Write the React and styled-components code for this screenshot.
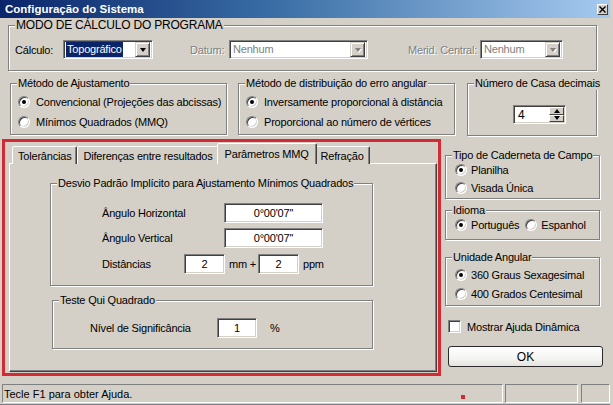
import React from "react";
import styled, { createGlobalStyle } from "styled-components";

const Global = createGlobalStyle`
  html, body { margin: 0; padding: 0; background: #d4d0c8; }
  body {
    font-family: "Liberation Sans", Arial, sans-serif;
    font-size: 11px;
    letter-spacing: -0.2px;
    color: #000;
  }
  * { box-sizing: border-box; }
`;

const Window = styled.div`
  width: 613px;
  height: 405px;
  background: #d4d0c8;
  display: flex;
  flex-direction: column;
  overflow: hidden;
  padding-right: 3px;
`;

const TitleBar = styled.div`
  height: 18px;
  flex: none;
  display: flex;
  align-items: center;
  justify-content: space-between;
  padding: 0 2px 0 5px;
  background: linear-gradient(to right, #0a246a, #3a6ea5 45%, #a6caf0);
  color: #fff;
  font: bold 11.5px "Liberation Sans", Arial, sans-serif;
  letter-spacing: 0;
`;

const CloseButton = styled.div`
  width: 11px;
  height: 11px;
  background: #d4d0c8;
  border: 1px solid;
  border-color: #fff #404040 #404040 #fff;
  display: flex;
  align-items: center;
  justify-content: center;
`;

const Content = styled.div`
  flex: 1;
  display: flex;
  flex-direction: column;
`;

const Row = styled.div`
  display: flex;
  align-items: flex-start;
  margin-top: ${(p) => p.$mt || 0}px;
  margin-left: ${(p) => p.$ml || 0}px;
`;

const GroupBox = styled.div`
  position: relative;
  flex: none;
  width: ${(p) => p.$w}px;
  height: ${(p) => p.$h}px;
  margin-top: ${(p) => p.$mt || 0}px;
  margin-left: ${(p) => p.$ml || 0}px;
  padding: ${(p) => p.$pad || "0"};
  border: 1px solid #808080;
  box-shadow: inset 1px 1px 0 #fff, 1px 1px 0 #fff;
  display: flex;
  flex-direction: ${(p) => (p.$row ? "row" : "column")};
  align-items: ${(p) => (p.$row ? "center" : "stretch")};
`;

const Legend = styled.span`
  position: absolute;
  top: -8px;
  left: 6px;
  padding: 0 1px;
  line-height: 14px;
  background: #d4d0c8;
  white-space: nowrap;
  font-size: ${(p) => p.$size || 11}px;
`;

const Caption = styled.span`
  flex: none;
  width: ${(p) => p.$w}px;
  margin-left: ${(p) => p.$ml || 0}px;
  white-space: nowrap;
  color: ${(p) => (p.$disabled ? "#808080" : "#000")};
  text-shadow: ${(p) => (p.$disabled ? "1px 1px 0 #fff" : "none")};
`;

const Combo = styled.div`
  flex: none;
  width: ${(p) => p.$w}px;
  height: 19px;
  background: #fff;
  border: 1px solid;
  border-color: #808080 #fff #fff #808080;
  box-shadow: inset 1px 1px 0 #404040, inset -1px -1px 0 #d4d0c8;
  padding: 2px;
  display: flex;
  align-items: center;
  justify-content: space-between;
`;

const ComboText = styled.span`
  padding: 0 1px;
  line-height: 15px;
  white-space: nowrap;
  color: ${(p) => (p.$disabled ? "#808080" : p.$selected ? "#fff" : "#000")};
  background: ${(p) => (p.$selected ? "#0a246a" : "transparent")};
`;

const DropButton = styled.div`
  width: 15px;
  height: 15px;
  flex: none;
  background: #d4d0c8;
  border: 1px solid;
  border-color: #d4d0c8 #404040 #404040 #d4d0c8;
  box-shadow: inset 1px 1px 0 #fff, inset -1px -1px 0 #808080;
  display: flex;
  align-items: center;
  justify-content: center;
`;

const Arrow = styled.span`
  width: 0;
  height: 0;
  border-left: 3.5px solid transparent;
  border-right: 3.5px solid transparent;
  border-${(p) => (p.$up ? "bottom" : "top")}: 4px solid ${(p) => (p.$disabled ? "#808080" : "#000")};
  filter: ${(p) => (p.$disabled ? "drop-shadow(1px 1px 0 #fff)" : "none")};
`;

const RadioItem = styled.label`
  display: flex;
  align-items: center;
  gap: ${(p) => (p.$gap === undefined ? 6 : p.$gap)}px;
  height: ${(p) => p.$h || 20}px;
  margin-left: ${(p) => p.$ml || 0}px;
  white-space: nowrap;
  flex: none;
`;

const RadioDot = styled.span`
  width: 12px;
  height: 12px;
  flex: none;
  border-radius: 50%;
  background: #fff;
  border: 1px solid;
  border-color: #808080 #fff #fff #808080;
  box-shadow: inset 1px 1px 0 #404040, inset -1px -1px 0 #d4d0c8;
  display: flex;
  align-items: center;
  justify-content: center;
  &::after {
    content: "";
    width: 4px;
    height: 4px;
    border-radius: 50%;
    background: ${(p) => (p.$checked ? "#000" : "transparent")};
  }
`;

const Radio = ({ checked, children, ...rest }) => (
  <RadioItem {...rest}>
    <RadioDot $checked={checked} />
    <span>{children}</span>
  </RadioItem>
);

const SpinBox = styled.div`
  width: 53px;
  height: 19px;
  background: #fff;
  border: 1px solid;
  border-color: #808080 #fff #fff #808080;
  box-shadow: inset 1px 1px 0 #404040, inset -1px -1px 0 #d4d0c8;
  padding: 2px 1px 2px 4px;
  display: flex;
  align-items: center;
  justify-content: space-between;
  font-size: 12px;
`;

const SpinButtons = styled.div`
  width: 15px;
  height: 15px;
  display: flex;
  flex-direction: column;
`;

const SpinHalf = styled.div`
  flex: 1;
  background: #d4d0c8;
  border: 1px solid;
  border-color: #fff #404040 #404040 #fff;
  display: flex;
  align-items: center;
  justify-content: center;
`;

const RedFrame = styled.div`
  flex: none;
  width: 439px;
  height: 237px;
  margin-left: 2px;
  border: 3px solid #d42a34;
  padding: 1px 1px 1px 4px;
  display: flex;
  flex-direction: column;
`;

const TabStrip = styled.div`
  height: 21px;
  flex: none;
  display: flex;
  align-items: flex-end;
  padding-left: 3px;
`;

const Tab = styled.div`
  position: relative;
  z-index: ${(p) => (p.$active ? 2 : 0)};
  height: ${(p) => (p.$active ? 21 : 18)}px;
  margin: 0 ${(p) => (p.$active ? -2 : 0)}px;
  padding: 0 ${(p) => (p.$active ? 7 : 5)}px;
  display: flex;
  align-items: center;
  white-space: nowrap;
  background: #d4d0c8;
  border: 1px solid;
  border-bottom: none;
  border-color: #fff #404040 transparent #fff;
  box-shadow: inset -1px 0 0 #808080;
  border-radius: 2px 2px 0 0;
`;

const TabPanel = styled.div`
  flex: 1;
  margin-top: -1px;
  border: 1px solid;
  border-color: #fff #404040 #404040 #fff;
  box-shadow: inset -1px -1px 0 #808080;
  padding-left: 40px;
  display: flex;
  flex-direction: column;
  align-items: flex-start;
`;

const FormRow = styled.div`
  display: flex;
  align-items: center;
  height: 20px;
  margin-top: ${(p) => p.$mt || 0}px;
`;

const RowLabel = styled.span`
  flex: none;
  width: ${(p) => p.$w}px;
  white-space: nowrap;
`;

const Field = styled.div`
  flex: none;
  width: ${(p) => p.$w}px;
  height: 20px;
  background: #fff;
  border: 1px solid;
  border-color: #808080 #fff #fff #808080;
  box-shadow: inset 1px 1px 0 #404040, inset -1px -1px 0 #d4d0c8;
  display: flex;
  align-items: center;
  justify-content: center;
`;

const Unit = styled.span`
  flex: none;
  width: ${(p) => (p.$w ? `${p.$w}px` : "auto")};
  margin-left: ${(p) => p.$ml || 0}px;
  white-space: nowrap;
`;

const SideColumn = styled.div`
  flex: none;
  width: 158px;
  margin-left: 4px;
  display: flex;
  flex-direction: column;
  align-items: flex-start;
`;

const CheckRow = styled.label`
  display: flex;
  align-items: center;
  gap: 6px;
  height: 13px;
  margin: 14px 0 0 3px;
  white-space: nowrap;
`;

const CheckBox = styled.span`
  width: 13px;
  height: 13px;
  background: #fff;
  border: 1px solid;
  border-color: #808080 #fff #fff #808080;
  box-shadow: inset 1px 1px 0 #404040, inset -1px -1px 0 #d4d0c8;
`;

const OkButton = styled.button`
  width: 155px;
  height: 21px;
  margin: 13px 0 0 3px;
  border: 1px solid #2a2a2a;
  border-radius: 3px;
  background: linear-gradient(#ffffff, #f4f4f2 60%, #e4e3de);
  font: inherit;
  font-size: 12px;
  color: #000;
  padding: 0;
`;

const StatusBar = styled.div`
  height: 22px;
  flex: none;
  display: flex;
  gap: 2px;
  padding: 1px 0 2px 2px;
  box-shadow: inset 0 -1px 0 #808080;
  font-size: 11px;
  letter-spacing: 0;
`;

const StatusPanel = styled.div`
  position: relative;
  width: ${(p) => (p.$w ? `${p.$w}px` : "auto")};
  flex: ${(p) => (p.$w ? "none" : 1)};
  border: 1px solid;
  border-color: #808080 #fff #fff #808080;
  padding-left: 1px;
  display: flex;
  align-items: center;
  margin-left: ${(p) => p.$ml || 0}px;
`;

const Mark = styled.span`
  position: absolute;
  left: 458px;
  top: 10px;
  width: 4px;
  height: 4px;
  background: #d42a34;
`;

export default function App() {
  return (
    <>
      <Global />
      <Window>
        <TitleBar>
          <span>Configuração do Sistema</span>
          <CloseButton>
            <svg width="7" height="7" viewBox="0 0 7 7">
              <path d="M0.5 0.5 L6.5 6.5 M6.5 0.5 L0.5 6.5" stroke="#000" strokeWidth="1.4" />
            </svg>
          </CloseButton>
        </TitleBar>
        <Content>
          <Row $mt={7} $ml={8}>
            <GroupBox $w={589} $h={46} $row $pad="3px 0 0 6px">
              <Legend $size={12}>MODO DE CÁLCULO DO PROGRAMA</Legend>
              <Caption $w={48}>Cálculo:</Caption>
              <Combo $w={90}>
                <ComboText $selected>Topográfico</ComboText>
                <DropButton>
                  <Arrow />
                </DropButton>
              </Combo>
              <Caption $w={39} $ml={37} $disabled>
                Datum:
              </Caption>
              <Combo $w={139}>
                <ComboText $disabled>Nenhum</ComboText>
                <DropButton>
                  <Arrow $disabled />
                </DropButton>
              </Combo>
              <Caption $w={72} $ml={40} $disabled>
                Merid. Central:
              </Caption>
              <Combo $w={83}>
                <ComboText $disabled>Nenhum</ComboText>
                <DropButton>
                  <Arrow $disabled />
                </DropButton>
              </Combo>
            </GroupBox>
          </Row>

          <Row $mt={12} $ml={10}>
            <GroupBox $w={217} $h={52} $pad="8px 0 0 7px">
              <Legend>Método de Ajustamento</Legend>
              <Radio checked>Convencional (Projeções das abcissas)</Radio>
              <Radio>Mínimos Quadrados (MMQ)</Radio>
            </GroupBox>
            <GroupBox $w={217} $h={52} $ml={11} $pad="8px 0 0 7px">
              <Legend>Método de distribuição do erro angular</Legend>
              <Radio checked>Inversamente proporcional à distância</Radio>
              <Radio>Proporcional ao número de vértices</Radio>
            </GroupBox>
            <GroupBox $w={130} $h={53} $ml={12} $pad="21px 0 0 45px">
              <Legend>Número de Casa decimais</Legend>
              <SpinBox>
                <span>4</span>
                <SpinButtons>
                  <SpinHalf>
                    <Arrow $up />
                  </SpinHalf>
                  <SpinHalf>
                    <Arrow />
                  </SpinHalf>
                </SpinButtons>
              </SpinBox>
            </GroupBox>
          </Row>

          <Row $mt={3}>
            <RedFrame>
              <TabStrip>
                <Tab>Tolerâncias</Tab>
                <Tab>Diferenças entre resultados</Tab>
                <Tab $active>Parâmetros MMQ</Tab>
                <Tab>Refração</Tab>
              </TabStrip>
              <TabPanel>
                <GroupBox $w={323} $h={103} $mt={19} $pad="19px 0 0 51px">
                  <Legend>Desvio Padrão Implícito para Ajustamento Mínimos Quadrados</Legend>
                  <FormRow>
                    <RowLabel $w={122}>Ângulo Horizontal</RowLabel>
                    <Field $w={99}>0°00'07''</Field>
                  </FormRow>
                  <FormRow $mt={5}>
                    <RowLabel $w={122}>Ângulo Vertical</RowLabel>
                    <Field $w={99}>0°00'07''</Field>
                  </FormRow>
                  <FormRow $mt={6}>
                    <RowLabel $w={82}>Distâncias</RowLabel>
                    <Field $w={41}>2</Field>
                    <Unit $ml={4} $w={29}>
                      mm +
                    </Unit>
                    <Field $w={41}>2</Field>
                    <Unit $ml={4}>ppm</Unit>
                  </FormRow>
                </GroupBox>
                <GroupBox $w={321} $h={49} $mt={14} $ml={2} $pad="17px 0 0 37px">
                  <Legend>Teste Qui Quadrado</Legend>
                  <FormRow>
                    <RowLabel $w={127}>Nível de Significância</RowLabel>
                    <Field $w={40}>1</Field>
                    <Unit $ml={13}>%</Unit>
                  </FormRow>
                </GroupBox>
              </TabPanel>
            </RedFrame>

            <SideColumn>
              <GroupBox $w={155} $h={44} $mt={16} $pad="5px 0 0 9px">
                <Legend>Tipo de Caderneta de Campo</Legend>
                <Radio checked $gap={4} $h={18}>
                  Planilha
                </Radio>
                <Radio $gap={4} $h={18}>
                  Visada Única
                </Radio>
              </GroupBox>
              <GroupBox $w={155} $h={30} $mt={11} $pad="0 0 0 9px" $row>
                <Legend>Idioma</Legend>
                <Radio checked $gap={4} $h={18}>
                  Português
                </Radio>
                <Radio $gap={4} $h={18} $ml={6}>
                  Espanhol
                </Radio>
              </GroupBox>
              <GroupBox $w={155} $h={49} $mt={17} $pad="7px 0 0 9px">
                <Legend>Unidade Angular</Legend>
                <Radio checked $gap={4} $h={19}>
                  360 Graus Sexagesimal
                </Radio>
                <Radio $gap={4} $h={19}>
                  400 Grados Centesimal
                </Radio>
              </GroupBox>
              <CheckRow>
                <CheckBox />
                <span>Mostrar Ajuda Dinâmica</span>
              </CheckRow>
              <OkButton>OK</OkButton>
            </SideColumn>
          </Row>
        </Content>
        <StatusBar>
          <StatusPanel $w={501}>
            Tecle F1 para obter Ajuda.
            <Mark />
          </StatusPanel>
          <StatusPanel $w={73}></StatusPanel>
          <StatusPanel $ml={1}></StatusPanel>
        </StatusBar>
      </Window>
    </>
  );
}
